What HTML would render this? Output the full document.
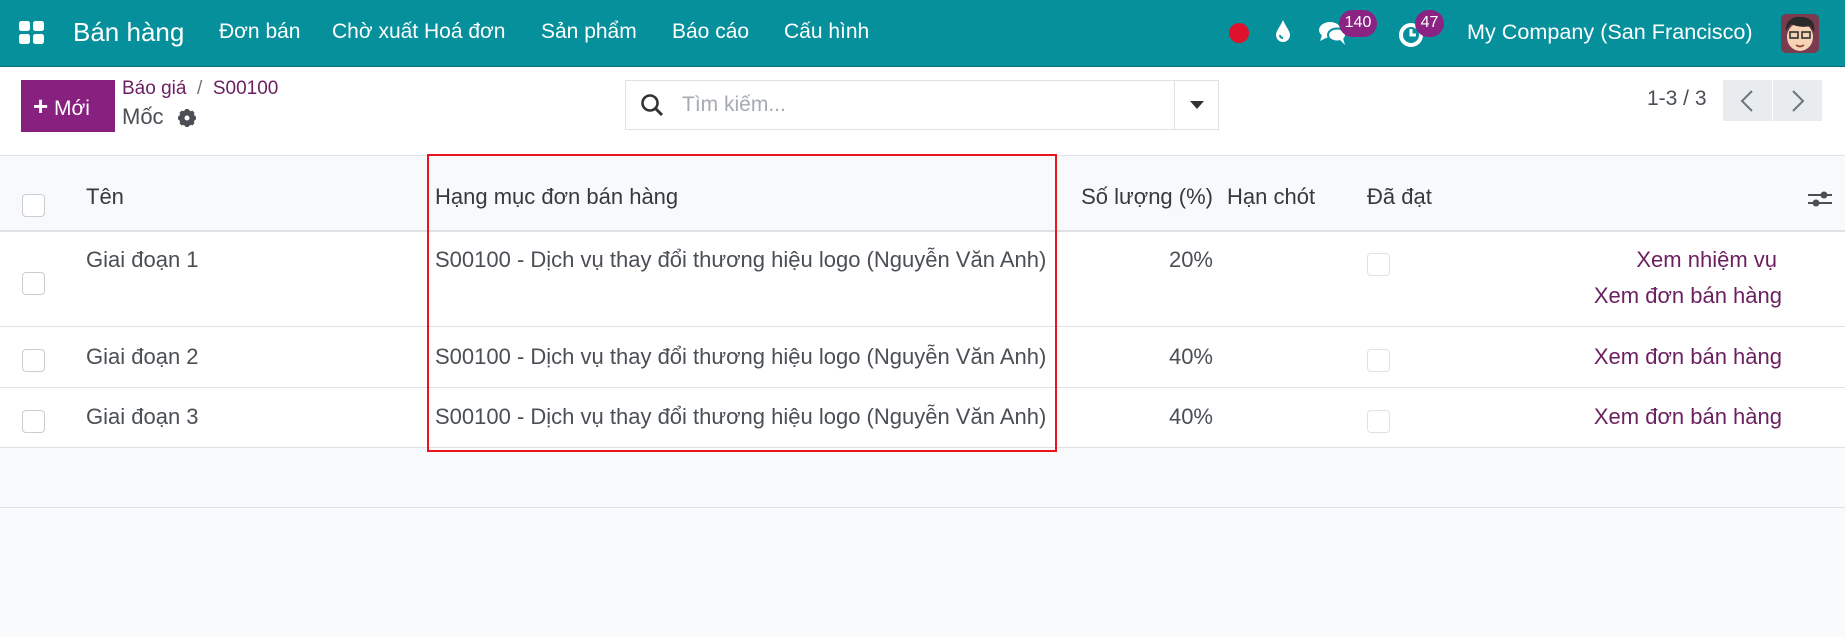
<!DOCTYPE html>
<html><head><meta charset="utf-8">
<style>
*{margin:0;padding:0;box-sizing:border-box}
body{width:1845px;height:637px;overflow:hidden;background:#f9fafb;font-family:"Liberation Sans",sans-serif;color:#4a4f55;position:relative}
.a{position:absolute;white-space:nowrap}
.nav{position:absolute;left:0;top:0;width:1845px;height:67px;background:#05909c;color:#fff;border-bottom:1px solid #06707a}
.nav .a{color:#fff}
.menu{font-size:21px;top:20px}
.cp{position:absolute;left:0;top:67px;width:1845px;height:89px;background:#fff;border-bottom:1px solid #dee2e6}
.hdr{position:absolute;left:0;top:156px;width:1845px;height:76px;background:#f8f9fa;border-bottom:2px solid #dee2e6}
.row{position:absolute;left:0;width:1845px;background:#fff;border-bottom:1px solid #dee2e6}
.cb{position:absolute;width:23px;height:23px;border:1px solid #c9ced3;border-radius:4px;background:#fff}
.t{font-size:22px}
.lnk{color:#6b1f60;font-size:22px}
.badge{position:absolute;background:#8a2383;color:#fff;border-radius:14px;font-size:16px;text-align:center;line-height:26px;height:27px}
</style></head><body>
<div class="nav">
  <svg class="a" style="left:19px;top:21px" width="26" height="24" viewBox="0 0 26 24"><rect x="0" y="0" width="11" height="10" rx="2.5" fill="#fff"/><rect x="14" y="0" width="11" height="10" rx="2.5" fill="#fff"/><rect x="0" y="13" width="11" height="10" rx="2.5" fill="#fff"/><rect x="14" y="13" width="11" height="10" rx="2.5" fill="#fff"/></svg>
  <div class="a" style="left:73px;top:17px;font-size:26px">Bán hàng</div>
  <div class="a menu" style="left:219px">Đơn bán</div>
  <div class="a menu" style="left:332px">Chờ xuất Hoá đơn</div>
  <div class="a menu" style="left:541px">Sản phẩm</div>
  <div class="a menu" style="left:672px">Báo cáo</div>
  <div class="a menu" style="left:784px">Cấu hình</div>
  <div class="a" style="left:1229px;top:23px;width:20px;height:20px;border-radius:50%;background:#e0112b"></div>
  <svg class="a" style="left:1275px;top:19px" width="16" height="25" viewBox="0 0 16 25"><path d="M8 1 C5 8 1 12 1 16 a7 7 0 0 0 14 0 C15 12 11 8 8 1Z" fill="#fff"/><path d="M5 16 a3 3 0 0 0 3 3" stroke="#05909c" stroke-width="2" fill="none"/></svg>
  <svg class="a" style="left:1318px;top:20px" width="30" height="26" viewBox="0 0 30 26"><ellipse cx="12" cy="10" rx="11" ry="8" fill="#fff"/><path d="M4 15 L2 21 L10 17Z" fill="#fff"/><ellipse cx="19" cy="15" rx="9" ry="6.5" fill="#fff" stroke="#05909c" stroke-width="2"/><path d="M22 20 L27 25 L25 18Z" fill="#fff"/></svg>
  <div class="badge" style="left:1339px;top:10px;width:38px">140</div>
  <svg class="a" style="left:1398px;top:20px" width="28" height="28" viewBox="0 0 28 28"><circle cx="13" cy="15" r="10" fill="none" stroke="#fff" stroke-width="4"/><path d="M13 9 V15 H18" stroke="#fff" stroke-width="3" fill="none"/></svg>
  <div class="badge" style="left:1415px;top:10px;width:29px">47</div>
  <div class="a" style="left:1467px;top:19px;font-size:21.6px">My Company (San Francisco)</div>
  <svg class="a" style="left:1781px;top:14px" width="38" height="39" viewBox="0 0 38 39"><rect width="38" height="39" rx="5" fill="#7a3b4f"/><ellipse cx="19" cy="23" rx="13" ry="14" fill="#f6d3b5"/><path d="M5 17 C4 5 14 2 20 3 C30 3 35 9 33 18 L29 12 C22 14 14 12 10 10 Z" fill="#2a2a2a"/><rect x="9" y="18" width="8" height="6" fill="none" stroke="#333" stroke-width="1.6"/><rect x="21" y="18" width="8" height="6" fill="none" stroke="#333" stroke-width="1.6"/><path d="M15 31 Q19 34 23 31" stroke="#8a3b2f" stroke-width="1.6" fill="none"/></svg>
</div>
<div class="cp">
  <div class="a" style="left:21px;top:13px;width:94px;height:52px;background:#87207f;color:#fff;font-size:21px;line-height:52px;padding-left:12px"><span style="font-size:26px;font-weight:bold">+</span> Mới</div>
  <div class="a" style="left:122px;top:11px;font-size:19px;color:#6b1f60">Báo giá <span style="color:#6c757d">&nbsp;/&nbsp;</span> S00100</div>
  <div class="a" style="left:122px;top:37px;font-size:22px;color:#4a4f55">Mốc</div>
  <svg class="a" style="left:177px;top:41px" width="20" height="20" viewBox="0 0 20 20"><circle cx="10" cy="10" r="6" fill="none" stroke="#4a4f55" stroke-width="4"/><g stroke="#4a4f55" stroke-width="3.5"><path d="M10 1V19M1 10H19M3.6 3.6L16.4 16.4M16.4 3.6L3.6 16.4"/></g><circle cx="10" cy="10" r="2.5" fill="#fff"/></svg>
  <div class="a" style="left:625px;top:13px;width:594px;height:50px;border:1px solid #dee2e6;background:#fff">
    <svg class="a" style="left:14px;top:12px" width="24" height="24" viewBox="0 0 24 24"><circle cx="10" cy="10" r="7.5" fill="none" stroke="#333" stroke-width="2.6"/><path d="M15.5 15.5L22 22" stroke="#333" stroke-width="3"/></svg>
    <div class="a" style="left:56px;top:12px;font-size:21px;color:#a5abb1">Tìm kiếm...</div>
    <div class="a" style="left:548px;top:0;width:1px;height:48px;background:#dee2e6"></div>
    <svg class="a" style="left:564px;top:20px" width="14" height="8" viewBox="0 0 14 8"><path d="M0 0H14L7 8Z" fill="#333"/></svg>
  </div>
  <div class="a" style="left:1647px;top:20px;font-size:21px;color:#4a4f55">1-3 / 3</div>
  <div class="a" style="left:1723px;top:13px;width:49px;height:41px;background:#e9ecef"></div>
  <div class="a" style="left:1773px;top:13px;width:49px;height:41px;background:#e9ecef"></div>
  <svg class="a" style="left:1740px;top:23px" width="14" height="22" viewBox="0 0 14 22"><path d="M12 1L2 11L12 21" stroke="#6c757d" stroke-width="2" fill="none"/></svg>
  <svg class="a" style="left:1791px;top:23px" width="14" height="22" viewBox="0 0 14 22"><path d="M2 1L12 11L2 21" stroke="#6c757d" stroke-width="2" fill="none"/></svg>
</div>
<div class="hdr">
  <div class="cb" style="left:22px;top:38px;background:#fff"></div>
  <div class="a t" style="left:86px;top:28px;color:#343a40">Tên</div>
  <div class="a t" style="left:435px;top:28px;color:#343a40">Hạng mục đơn bán hàng</div>
  <div class="a t" style="right:632px;top:28px;color:#343a40">Số lượng (%)</div>
  <div class="a t" style="left:1227px;top:28px;color:#343a40">Hạn chót</div>
  <div class="a t" style="left:1367px;top:28px;color:#343a40">Đã đạt</div>
  <svg class="a" style="left:1808px;top:32px" width="24" height="22" viewBox="0 0 24 22"><path d="M0 7H24M0 15H24" stroke="#4a4f55" stroke-width="2"/><circle cx="16" cy="7" r="3.5" fill="#4a4f55"/><circle cx="8" cy="15" r="3.5" fill="#4a4f55"/></svg>
</div>
<div class="row" style="top:232px;height:95px">
  <div class="cb" style="left:22px;top:40px"></div>
  <div class="a t" style="left:86px;top:15px">Giai đoạn 1</div>
  <div class="a t" style="left:435px;top:15px">S00100 - Dịch vụ thay đổi thương hiệu logo (Nguyễn Văn Anh)</div>
  <div class="a t" style="right:632px;top:15px">20%</div>
  <div class="cb" style="left:1367px;top:21px;border-color:#dee2e6"></div>
  <div class="a lnk" style="right:68px;top:15px">Xem nhiệm vụ</div>
  <div class="a lnk" style="right:63px;top:51px">Xem đơn bán hàng</div>
</div>
<div class="row" style="top:327px;height:61px">
  <div class="cb" style="left:22px;top:22px"></div>
  <div class="a t" style="left:86px;top:17px">Giai đoạn 2</div>
  <div class="a t" style="left:435px;top:17px">S00100 - Dịch vụ thay đổi thương hiệu logo (Nguyễn Văn Anh)</div>
  <div class="a t" style="right:632px;top:17px">40%</div>
  <div class="cb" style="left:1367px;top:22px;border-color:#dee2e6"></div>
  <div class="a lnk" style="right:63px;top:17px">Xem đơn bán hàng</div>
</div>
<div class="row" style="top:388px;height:60px">
  <div class="cb" style="left:22px;top:22px"></div>
  <div class="a t" style="left:86px;top:16px">Giai đoạn 3</div>
  <div class="a t" style="left:435px;top:16px">S00100 - Dịch vụ thay đổi thương hiệu logo (Nguyễn Văn Anh)</div>
  <div class="a t" style="right:632px;top:16px">40%</div>
  <div class="cb" style="left:1367px;top:22px;border-color:#dee2e6"></div>
  <div class="a lnk" style="right:63px;top:16px">Xem đơn bán hàng</div>
</div>
<div class="row" style="top:448px;height:60px;background:#f9fafb"></div>
<div class="a" style="left:427px;top:154px;width:630px;height:298px;border:2.5px solid #e8161c"></div>
</body></html>
